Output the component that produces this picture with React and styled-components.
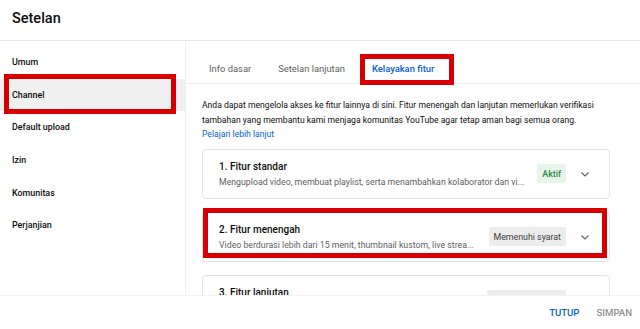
import React from "react";
import styled, { createGlobalStyle } from "styled-components";

const GlobalStyle = createGlobalStyle`
  html, body {
    margin: 0;
    padding: 0;
    background: #fff;
  }
  body {
    font-family: Roboto, "Noto Sans", "Liberation Sans", sans-serif;
    color: #0d0d0d;
    width: 640px;
    height: 329px;
    overflow: hidden;
  }
`;

const Page = styled.div`
  width: 640px;
  height: 329px;
  display: flex;
  flex-direction: column;
`;

const Header = styled.header`
  height: 40px;
  flex: none;
  border-bottom: 1px solid #e6e6e6;
  padding-left: 12px;
  font-size: 14.5px;
  font-weight: 500;
  line-height: 38px;
`;

const Main = styled.div`
  display: flex;
  height: 254px;
  flex: none;
  overflow: hidden;
`;

const Sidebar = styled.nav`
  width: 185px;
  flex: none;
  border-right: 1px solid #efefef;
  padding-top: 5px;
`;

const NavItem = styled.div`
  position: relative;
  height: 32.6px;
  display: flex;
  align-items: center;
  padding-left: 12px;
  font-size: 8.9px;
  font-weight: 500;
  background: ${props => (props.$active ? "#f0f0f0" : "transparent")};
`;

const Mark = styled.span`
  position: absolute;
  border: 5px solid #d60000;
  pointer-events: none;
`;

const NavMark = styled(Mark)`
  left: 4px;
  right: 9px;
  top: -5px;
  bottom: -3px;
`;

const Content = styled.section`
  flex: 1;
  display: flex;
  flex-direction: column;
  min-width: 0;
`;

const Tabs = styled.div`
  height: 42px;
  flex: none;
  display: flex;
  align-items: stretch;
  gap: 27px;
  padding-left: 23px;
  border-bottom: 1px solid #efefef;
`;

const Tab = styled.div`
  position: relative;
  display: flex;
  align-items: center;
  padding-top: 12px;
  font-size: 9.4px;
  color: ${props => (props.$active ? "#065fd4" : "#606060")};
  font-weight: ${props => (props.$active ? 500 : 400)};
`;

const TabMark = styled(Mark)`
  left: -12px;
  right: -20px;
  top: 13px;
  bottom: -2px;
`;

const Body = styled.div`
  padding: 14px 26px 0 16px;
  display: flex;
  flex-direction: column;
`;

const Intro = styled.p`
  margin: 0;
  font-size: 8.6px;
  line-height: 14.5px;
  color: #0d0d0d;
`;

const Link = styled.a`
  color: #065fd4;
  text-decoration: none;
`;

const Cards = styled.div`
  margin-top: 7px;
  margin-right: 4px;
  display: flex;
  flex-direction: column;
  gap: 13px;
`;

const Card = styled.div`
  position: relative;
  height: 50px;
  flex: none;
  box-sizing: border-box;
  border: 1px solid #e3e3e3;
  border-radius: 4px;
  display: flex;
  align-items: center;
  padding: 0 18px 0 16px;
`;

const CardMark = styled(Mark)`
  left: 0px;
  right: 2px;
  top: -5px;
  bottom: 3px;
`;

const CardText = styled.div`
  flex: 1;
  min-width: 0;
  display: flex;
  flex-direction: column;
  gap: 3px;
`;

const CardTitle = styled.div`
  font-size: 10px;
  font-weight: 500;
  line-height: 13px;
`;

const CardDesc = styled.div`
  font-size: 8.75px;
  line-height: 12px;
  color: #606060;
  white-space: nowrap;
`;

const Badge = styled.span`
  flex: none;
  height: 19px;
  display: flex;
  align-items: center;
  padding: 0 5px;
  margin-left: 8px;
  font-size: 8.8px;
  border-radius: 2px;
  color: ${props => (props.$on ? "#1e8e3e" : "#3c3c3c")};
  font-weight: ${props => (props.$on ? 500 : 400)};
  background: ${props => (props.$on ? "#e6f4ea" : "#ececec")};
  min-width: ${props => (props.$wide ? "69px" : "auto")};
`;

const Chevron = styled.svg`
  flex: none;
  width: 12px;
  height: 12px;
  margin-left: 13px;
`;

const Footer = styled.footer`
  flex: 1;
  border-top: 1px solid #f2f2f2;
  display: flex;
  align-items: center;
  justify-content: flex-end;
  gap: 17px;
  padding-right: 8px;
`;

const FooterButton = styled.button`
  border: 0;
  background: none;
  padding: 0;
  font-family: inherit;
  font-size: 9.6px;
  font-weight: 500;
  text-transform: uppercase;
  color: ${props => (props.$primary ? "#065fd4" : "#909090")};
`;

const ChevronIcon = () => (
  <Chevron viewBox="0 0 12 12">
    <path d="M2.5 4.5 L6 8 L9.5 4.5" fill="none" stroke="#606060" strokeWidth="1.1" />
  </Chevron>
);

const navItems = ["Umum", "Channel", "Default upload", "Izin", "Komunitas", "Perjanjian"];

const features = [
  {
    title: "1. Fitur standar",
    desc: "Mengupload video, membuat playlist, serta menambahkan kolaborator dan vi...",
    badge: "Aktif",
    on: true,
  },
  {
    title: "2. Fitur menengah",
    desc: "Video berdurasi lebih dari 15 menit, thumbnail kustom, live strea...",
    badge: "Memenuhi syarat",
    marked: true,
  },
  {
    title: "3. Fitur lanjutan",
    desc: "Monetisasi, fitur interaktif, dan lainnya",
    badge: "",
    wide: true,
  },
];

const App = () => (
  <React.Fragment>
    <GlobalStyle />
    <Page>
      <Header>Setelan</Header>
      <Main>
        <Sidebar>
          {navItems.map(item => (
            <NavItem key={item} $active={item === "Channel"}>
              {item}
              {item === "Channel" && <NavMark />}
            </NavItem>
          ))}
        </Sidebar>
        <Content>
          <Tabs>
            <Tab>Info dasar</Tab>
            <Tab>Setelan lanjutan</Tab>
            <Tab $active>
              Kelayakan fitur
              <TabMark />
            </Tab>
          </Tabs>
          <Body>
            <Intro>
              Anda dapat mengelola akses ke fitur lainnya di sini. Fitur menengah dan lanjutan memerlukan
              verifikasi tambahan yang membantu kami menjaga komunitas YouTube agar tetap aman bagi semua orang.
              <br />
              <Link href="#">Pelajari lebih lanjut</Link>
            </Intro>
            <Cards>
              {features.map(f => (
                <Card key={f.title}>
                  <CardText>
                    <CardTitle>{f.title}</CardTitle>
                    <CardDesc>{f.desc}</CardDesc>
                  </CardText>
                  <Badge $on={f.on} $wide={f.wide}>{f.badge}</Badge>
                  <ChevronIcon />
                  {f.marked && <CardMark />}
                </Card>
              ))}
            </Cards>
          </Body>
        </Content>
      </Main>
      <Footer>
        <FooterButton $primary>Tutup</FooterButton>
        <FooterButton>Simpan</FooterButton>
      </Footer>
    </Page>
  </React.Fragment>
);

export default App;
